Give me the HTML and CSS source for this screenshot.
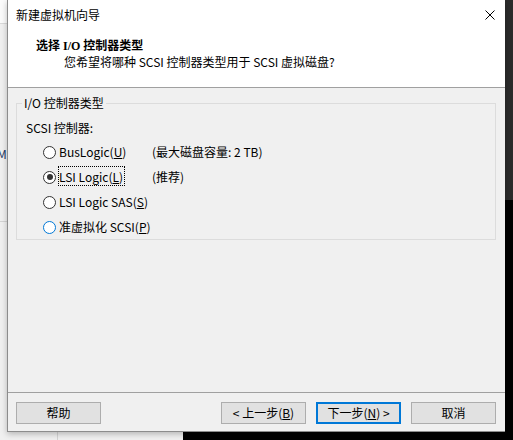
FILE: index.html
```html
<!DOCTYPE html>
<html lang="zh-CN">
<head>
<meta charset="utf-8">
<title>新建虚拟机向导</title>
<link rel="stylesheet" href="styles.css">
</head>
<body>
<div class="desktop">
  <div class="bg-app">
    <div class="bg-app-top"></div>
    <span class="bg-letter">M</span>
    <div class="bg-app-line"></div>
    <div class="bg-app-vline"></div>
  </div>
  <div class="bg-dark"></div>

  <div class="dialog">
    <div class="titlebar">
      <span class="title">新建虚拟机向导</span>
      <svg class="close" width="10" height="10" viewBox="0 0 10 10" aria-hidden="true">
        <path d="M0.5 0.5 L9.5 9.5 M9.5 0.5 L0.5 9.5" stroke="#000" stroke-width="1" fill="none"/>
      </svg>
    </div>

    <div class="header">
      <div class="h-title">选择 I/O 控制器类型</div>
      <div class="h-sub">您希望将哪种 SCSI 控制器类型用于 SCSI 虚拟磁盘?</div>
    </div>

    <div class="content">
      <fieldset class="group">
        <legend>I/O 控制器类型</legend>
        <div class="group-label">SCSI 控制器:</div>
        <div class="options">
          <div class="opt">
            <span class="radio"></span>
            <span class="opt-label">BusLogic(<u>U</u>)</span>
            <span class="note">(最大磁盘容量: 2 TB)</span>
          </div>
          <div class="opt">
            <span class="radio checked"></span>
            <span class="opt-label"><span class="focus">LSI Logic(<u>L</u>)</span></span>
            <span class="note">(推荐)</span>
          </div>
          <div class="opt">
            <span class="radio"></span>
            <span class="opt-label wide">LSI Logic SAS(<u>S</u>)</span>
          </div>
          <div class="opt">
            <span class="radio hover"></span>
            <span class="opt-label wide">准虚拟化 SCSI(<u>P</u>)</span>
          </div>
        </div>
      </fieldset>
    </div>

    <div class="footer">
      <button class="btn">帮助</button>
      <button class="btn push">&lt; 上一步(<u>B</u>)</button>
      <button class="btn default">下一步(<u>N</u>) &gt;</button>
      <button class="btn">取消</button>
    </div>
  </div>
</div>
</body>
</html>
```
FILE: styles.css
```css
html, body {
  margin: 0;
  padding: 0;
  background: #000;
}

body {
  font-family: "Noto Sans CJK SC", "Noto Sans", sans-serif;
  font-size: 12px;
  line-height: 16px;
  color: #000;
}

.desktop {
  position: relative;
  width: 513px;
  height: 440px;
  overflow: hidden;
  background: #000;
}

/* background application window (behind dialog, left) */
.bg-app {
  position: absolute;
  left: 0;
  top: 0;
  width: 183px;
  height: 440px;
  background: #f0f0f0;
}

.bg-app-top {
  height: 23px;
  background: #fbfbfb;
  border-bottom: 1px solid #d9d9d9;
}

.bg-letter {
  position: absolute;
  left: -3px;
  top: 146px;
  font-size: 12px;
  color: #1b3a66;
}

.bg-app-line {
  position: absolute;
  left: 0;
  top: 221px;
  width: 183px;
  height: 1px;
  background: #d4d4d4;
}

.bg-app-vline {
  position: absolute;
  left: 57px;
  top: 400px;
  width: 1px;
  height: 40px;
  background: #d4d4d4;
}

/* dark window at the right edge */
.bg-dark {
  position: absolute;
  right: 0;
  top: 0;
  width: 8px;
  height: 200px;
  background: #2b2b2b;
}

/* dialog window */
.dialog {
  position: absolute;
  left: 7px;
  top: 0;
  width: 498px;
  height: 432px;
  box-sizing: border-box;
  border-left: 1px solid #8c8c8c;
  border-bottom: 1px solid #8c8c8c;
  background: #f0f0f0;
  display: flex;
  flex-direction: column;
  box-shadow: 0 2px 6px rgba(0, 0, 0, 0.25);
}

.titlebar {
  height: 30px;
  background: #fff;
  display: flex;
  align-items: center;
  padding-left: 8px;
}

.close {
  margin-left: auto;
  margin-right: 10px;
  display: block;
}

.header {
  background: #fff;
  padding: 8px 0 17px 28px;
  border-bottom: 1px solid #a0a0a0;
}

.h-title {
  font-family: "Liberation Serif", "Noto Sans CJK SC", serif;
  font-weight: bold;
}

.h-sub {
  margin-left: 28px;
}

.content {
  flex: 1;
  padding: 0 9px 0 8px;
}

.group {
  margin: 7px 0 0;
  padding: 0 8px 0 5px;
  border: 1px solid #dcdcdc;
  min-width: 0;
}

.group legend {
  padding: 0 2px;
  line-height: 16px;
}

.group-label {
  margin-top: 9px;
  margin-left: 4px;
}

.options {
  margin-top: 4px;
  display: flex;
  flex-direction: column;
  gap: 1px;
}

.opt {
  height: 24px;
  display: flex;
  align-items: center;
  padding-left: 21px;
}

.radio {
  width: 13px;
  height: 13px;
  box-sizing: border-box;
  border: 1px solid #333;
  border-radius: 50%;
  background: #fff;
  display: flex;
  align-items: center;
  justify-content: center;
  flex: none;
}

.radio.checked::after {
  content: "";
  width: 6px;
  height: 6px;
  border-radius: 50%;
  background: #333;
}

.radio.hover {
  border-color: #0078d7;
}

.opt-label {
  margin-left: 3px;
  width: 93px;
  flex: none;
}

.opt-label.wide {
  width: auto;
}

.focus {
  outline: 1px dotted #000;
  outline-offset: 0;
  padding: 1px 1px 0 0;
}

.footer {
  border-top: 1px solid #a0a0a0;
  padding: 9px 9px 7px 8px;
  display: flex;
  gap: 10px;
}

.btn {
  width: 85px;
  height: 22px;
  box-sizing: border-box;
  border: 1px solid #adadad;
  background: #e1e1e1;
  font-family: "Noto Sans CJK SC", "Noto Sans", sans-serif;
  font-size: 12px;
  line-height: 16px;
  color: #000;
  padding: 0;
  margin: 0;
}

.btn.push {
  margin-left: auto;
}

.btn.default {
  border: 2px solid #0078d7;
}
```
